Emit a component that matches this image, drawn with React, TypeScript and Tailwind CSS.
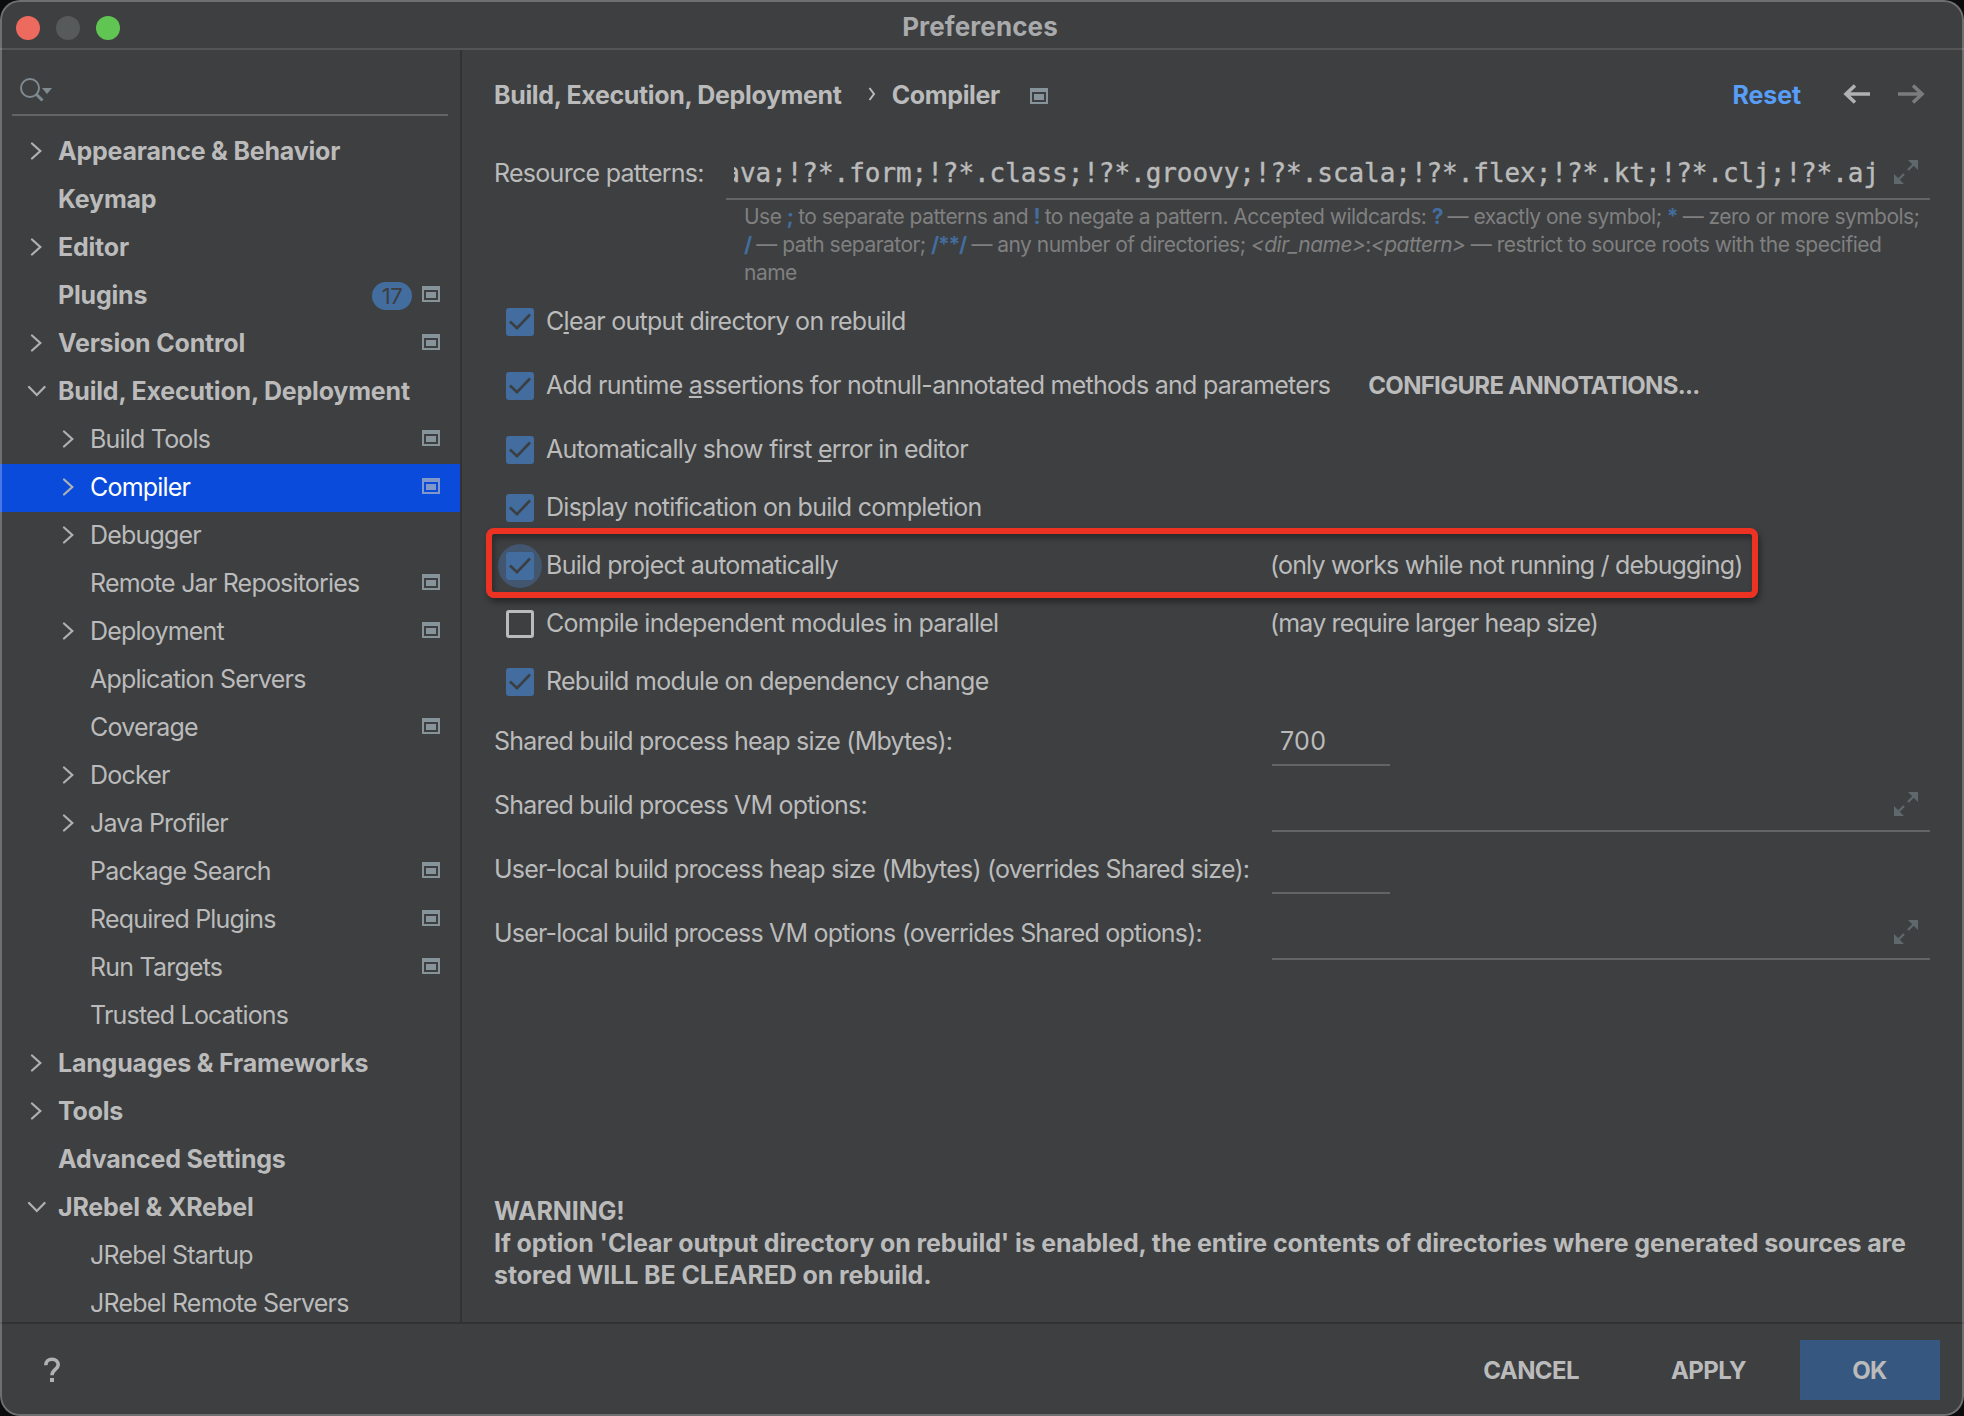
import React from 'react'

type TreeItem = {
  label: string
  level?: number
  arrow?: 'right' | 'down'
  project?: boolean
  badge?: string
  selected?: boolean
}

const tree: TreeItem[] = [
  { label: 'Appearance & Behavior', arrow: 'right' },
  { label: 'Keymap' },
  { label: 'Editor', arrow: 'right' },
  { label: 'Plugins', project: true, badge: '17' },
  { label: 'Version Control', arrow: 'right', project: true },
  { label: 'Build, Execution, Deployment', arrow: 'down' },
  { label: 'Build Tools', level: 1, arrow: 'right', project: true },
  { label: 'Compiler', level: 1, arrow: 'right', project: true, selected: true },
  { label: 'Debugger', level: 1, arrow: 'right' },
  { label: 'Remote Jar Repositories', level: 1, project: true },
  { label: 'Deployment', level: 1, arrow: 'right', project: true },
  { label: 'Application Servers', level: 1 },
  { label: 'Coverage', level: 1, project: true },
  { label: 'Docker', level: 1, arrow: 'right' },
  { label: 'Java Profiler', level: 1, arrow: 'right' },
  { label: 'Package Search', level: 1, project: true },
  { label: 'Required Plugins', level: 1, project: true },
  { label: 'Run Targets', level: 1, project: true },
  { label: 'Trusted Locations', level: 1 },
  { label: 'Languages & Frameworks', arrow: 'right' },
  { label: 'Tools', arrow: 'right' },
  { label: 'Advanced Settings' },
  { label: 'JRebel & XRebel', arrow: 'down' },
  { label: 'JRebel Startup', level: 1 },
  { label: 'JRebel Remote Servers', level: 1 },
]

function Chevron({ dir }: { dir: 'right' | 'down' }) {
  return (
    <svg width="20" height="20" viewBox="0 0 20 20" fill="none" stroke="#afb1b3" strokeWidth="2.2" strokeLinecap="round">
      {dir === 'right' ? <path d="M6 2.5l8.300 7.5-8.300 7.500" /> : <path d="M3 6l7.800 8 7.800-8" />}
    </svg>
  )
}

function ProjectIcon() {
  return (
    <svg width="18" height="16" viewBox="0 0 18 16" fill="currentColor">
      <path fillRule="evenodd" d="M0 0h18v16H0zM2 4v10h14V4z" />
      <path d="M4 6h10v6H4z" />
    </svg>
  )
}

function ExpandIcon() {
  return (
    <svg width="24" height="24" viewBox="0 0 24 24" fill="#5f686d">
      <path d="M14 0h10v10z" />
      <path d="M0 14v10h10z" />
      <path d="M14 10l7-7M10 14l-7 7" stroke="#5f686d" strokeWidth="2.4" />
    </svg>
  )
}

function Checkbox({ checked = true, focused = false }: { checked?: boolean; focused?: boolean }) {
  if (!checked) return <div className="size-7 shrink-0 rounded-[3px] border-[3px] border-[#bbbbbb]" />
  return (
    <div className="relative size-7 shrink-0">
      {focused && <div className="absolute -inset-2 rounded-full bg-[#42566f]" />}
      <div className="relative size-7 rounded-[3px] bg-[#436d9f]">
        <svg width="28" height="28" viewBox="0 0 28 28" fill="none" stroke="#3c3f41" strokeWidth="2.7">
          <path d="M4 13.5l7 6.7L24 6.5" />
        </svg>
      </div>
    </div>
  )
}

function TreeRow({ item }: { item: TreeItem }) {
  return (
    <div className={`flex h-12 shrink-0 items-center pr-5 ${item.selected ? 'bg-[#0a4bdc] text-white' : ''} ${item.level ? 'pl-[58px]' : 'pl-[26px]'}`}>
      <div className="mr-3 h-5 w-5 shrink-0 -translate-y-px">{item.arrow && <Chevron dir={item.arrow} />}</div>
      <div className={`grow whitespace-nowrap pb-0.5 ${item.level ? '' : 'font-bold tracking-[-0.2px]'}`}>
        {item.label}
      </div>
      {item.badge && (
        <div className="mr-2.5 flex h-7 w-10 items-center justify-center rounded-full bg-[#436d9f] text-[22px] tracking-tight text-[#3c3f41]">
          {item.badge}
        </div>
      )}
      {item.project && (
        <div className={`-translate-y-0.5 ${item.selected ? 'text-[#7f98c8]' : 'text-[#87939a]'}`}>
          <ProjectIcon />
        </div>
      )}
    </div>
  )
}

function Key({ children }: { children: React.ReactNode }) {
  return <b className="font-bold tracking-[-1.2px] text-[#436d9f]">{children}</b>
}

const u = 'underline decoration-2 underline-offset-[2px] [text-decoration-skip-ink:none]'

function FieldRow({ label, value = '', wide = false, className }: { label: string; value?: string; wide?: boolean; className: string }) {
  return (
    <div className={`flex ${className}`}>
      <div className="flex w-[778px] shrink-0 items-center whitespace-nowrap">{label}</div>
      <div className={`flex items-center border-b-2 border-[#646464] ${wide ? 'w-[658px] justify-end pr-3' : 'w-[118px] pl-2 pt-0.5 tracking-[0.3px]'}`}>
        {value}
        {wide && <ExpandIcon />}
      </div>
    </div>
  )
}

export default function App() {
  return (
    <div className="h-[1416px] w-[1964px] bg-[#0c0c0d]">
      <div className="relative flex h-full w-full flex-col overflow-hidden rounded-[20px] bg-[#3d3f41] font-['Inter',sans-serif] text-[25px] leading-8 tracking-[-0.8px] text-[#bbbbbb]">
        {/* Title bar */}
        <div className="flex h-[50px] shrink-0 items-center border-b-2 border-[#555555] pl-4">
          <div className="flex w-[220px] gap-4 pt-2">
            <div className="size-6 rounded-full bg-[#ed6a5e]" />
            <div className="size-6 rounded-full bg-[#565a5b]" />
            <div className="size-6 rounded-full bg-[#61c554]" />
          </div>
          <div className="grow pr-[240px] pt-1.5 text-center text-[26px] font-bold tracking-[0.1px] text-[#a9aaab]">Preferences</div>
        </div>

        <div className="flex h-[1272px] shrink-0">
          {/* Settings tree */}
          <div className="flex w-[462px] shrink-0 flex-col overflow-hidden border-r-2 border-[#323232]">
            <div className="mx-3 mb-3 h-[66px] shrink-0 border-b-2 border-[#646464] pl-2 pt-7">
              <svg width="34" height="26" viewBox="0 0 34 26" fill="none" stroke="#7f8b91" strokeWidth="2">
                <circle cx="10" cy="10" r="9" />
                <path d="M16.5 16.5l6 6" strokeWidth="3" />
                <path d="M22 10h10l-5 6z" fill="#7f8b91" stroke="none" />
              </svg>
            </div>
            {tree.map((item) => (
              <TreeRow key={item.label} item={item} />
            ))}
          </div>

          {/* Compiler page */}
          <div className="flex min-w-0 grow flex-col pl-8">
            <div className="mt-7 flex h-8 items-center whitespace-nowrap font-bold tracking-[-0.35px]">
              <span className="pt-0.5">Build, Execution, Deployment</span>
              <svg className="ml-[26px] mr-[16px]" width="8" height="14" viewBox="0 0 8 14" fill="none" stroke="#bbbbbb" strokeWidth="2">
                <path d="M1.500 1l4.500 6-4.500 6" />
              </svg>
              <span className="pt-0.5">Compiler</span>
              <div className="ml-[30px] translate-y-0.5 text-[#87939a]">
                <ProjectIcon />
              </div>
              <span className="ml-auto mr-[42px] pt-0.5 tracking-[-0.1px] text-[#589df6]">Reset</span>
              <svg width="28" height="20" viewBox="0 0 28 20" fill="none" stroke="#afb1b3" strokeWidth="3.6">
                <path d="M27 10H3M12 1.500L3 10l9 8.500" />
              </svg>
              <svg className="ml-[26px] mr-[39px]" width="28" height="20" viewBox="0 0 28 20" fill="none" stroke="#7a7c7d" strokeWidth="3.6">
                <path d="M1 10h24M16 1.500l9 8.500-9 8.500" />
              </svg>
            </div>

            <div className="mt-9 flex h-[54px]">
              <div className="flex w-[232px] shrink-0 items-center tracking-[-0.72px]">Resource patterns:</div>
              <div className="flex w-[1204px] items-center border-b-2 border-[#646464] pl-2 pr-3">
                <div className="flex w-[1145px] justify-end overflow-hidden whitespace-nowrap pt-0.5 font-['DejaVu_Sans_Mono',monospace] text-[26px] tracking-[-0.05px] [-webkit-text-stroke:0.4px_#bbbbbb]">
                  java;!?*.form;!?*.class;!?*.groovy;!?*.scala;!?*.flex;!?*.kt;!?*.clj;!?*.aj
                </div>
                <div className="ml-[15px]">
                  <ExpandIcon />
                </div>
              </div>
            </div>

            <div className="ml-[250px] mt-[3px] h-[84px] whitespace-nowrap text-[21px] leading-[28px] tracking-[-0.53px] text-[#808080]">
              <div>
                Use <Key>;</Key> to separate patterns and <Key>!</Key> to negate a pattern. Accepted wildcards: <Key>?</Key> — exactly one symbol; <Key>*</Key> — zero or more symbols;
              </div>
              <div>
                <Key>/</Key> — path separator; <Key>/**/</Key> — any number of directories; <i>&lt;dir_name&gt;</i>:<i>&lt;pattern&gt;</i> — restrict to source roots with the specified
              </div>
              <div>name</div>
            </div>

            <div className="flex flex-col whitespace-nowrap pl-3 tracking-[-0.73px]">
              <div className="mt-[3px] flex h-16 items-center gap-3">
                <Checkbox />
                <span className="pb-0.5">C<span className={u}>l</span>ear output directory on rebuild</span>
              </div>
              <div className="flex h-16 items-center gap-3">
                <Checkbox />
                <span className="pb-0.5">Add runtime <span className={u}>a</span>ssertions for notnull-annotated methods and parameters</span>
                <span className="ml-[26px] text-[24px] font-bold tracking-[-0.7px]">CONFIGURE ANNOTATIONS...</span>
              </div>
              <div className="flex h-16 items-center gap-3">
                <Checkbox />
                <span className="pb-0.5">Automatically show first <span className={u}>e</span>rror in editor</span>
              </div>
              <div className="-mt-[3px] flex h-[58px] items-center gap-3">
                <Checkbox />
                <span className="pb-0.5">Display notification on build completion</span>
              </div>
              <div className="relative flex h-[58px] items-center gap-3">
                <Checkbox focused />
                <span className="w-[712px] pb-0.5">Build project automatically</span>
                <span className="pb-0.5 tracking-[-0.83px]">(only works while not running / debugging)</span>
                {/* highlight frame */}
                <div className="absolute -left-5 -top-[9px] h-[70px] w-[1272px] rounded-[8px] border-[6px] border-[#ec3323] shadow-[2px_4px_6px_rgba(0,0,0,0.4),inset_2px_4px_6px_rgba(0,0,0,0.35)]" />
              </div>
              <div className="flex h-[58px] items-center gap-3">
                <Checkbox checked={false} />
                <span className="w-[712px] pb-0.5">Compile independent modules in parallel</span>
                <span className="pb-0.5 tracking-[-0.85px]">(may require larger heap size)</span>
              </div>
              <div className="flex h-[58px] items-center gap-3">
                <Checkbox />
                <span className="pb-0.5">Rebuild module on dependency change</span>
              </div>
            </div>

            <FieldRow label="Shared build process heap size (Mbytes):" value="700" className="mt-[5px] h-[50px]" />
            <FieldRow label="Shared build process VM options:" wide className="mt-[12px] h-[54px]" />
            <FieldRow label="User-local build process heap size (Mbytes) (overrides Shared size):" className="mt-[12px] h-[50px]" />
            <FieldRow label="User-local build process VM options (overrides Shared options):" wide className="mt-[12px] h-[54px]" />

            <div className="mb-[31px] mt-auto whitespace-nowrap font-bold tracking-[-0.12px]">
              <div>WARNING!</div>
              <div>If option 'Clear output directory on rebuild' is enabled, the entire contents of directories where generated sources are</div>
              <div>stored WILL BE CLEARED on rebuild.</div>
            </div>
          </div>
        </div>

        {/* Footer */}
        <div className="flex grow items-center border-t-2 border-[#323232] pl-[42px] pr-6 text-[24px] font-bold tracking-[-0.6px]">
          <svg width="20" height="26" viewBox="0 0 20 26" fill="none" stroke="#afb1b3" strokeWidth="3.6">
            <path d="M3.8 8.2C3.8 4.6 6.4 2.2 10 2.2s6.2 2.3 6.2 5.6C16.2 12.4 10 12.6 10 18.2" />
            <path d="M10 21v4" strokeWidth="4" />
          </svg>
          <div className="ml-auto pt-0.5">CANCEL</div>
          <div className="ml-[92px] pt-0.5">APPLY</div>
          <div className="ml-[54px] flex h-[60px] w-[140px] items-center justify-center bg-[#365880] pr-px pt-0.5">OK</div>
        </div>
        <div className="pointer-events-none absolute inset-0 rounded-[20px] border-2 border-white/25" />
      </div>
    </div>
  )
}
